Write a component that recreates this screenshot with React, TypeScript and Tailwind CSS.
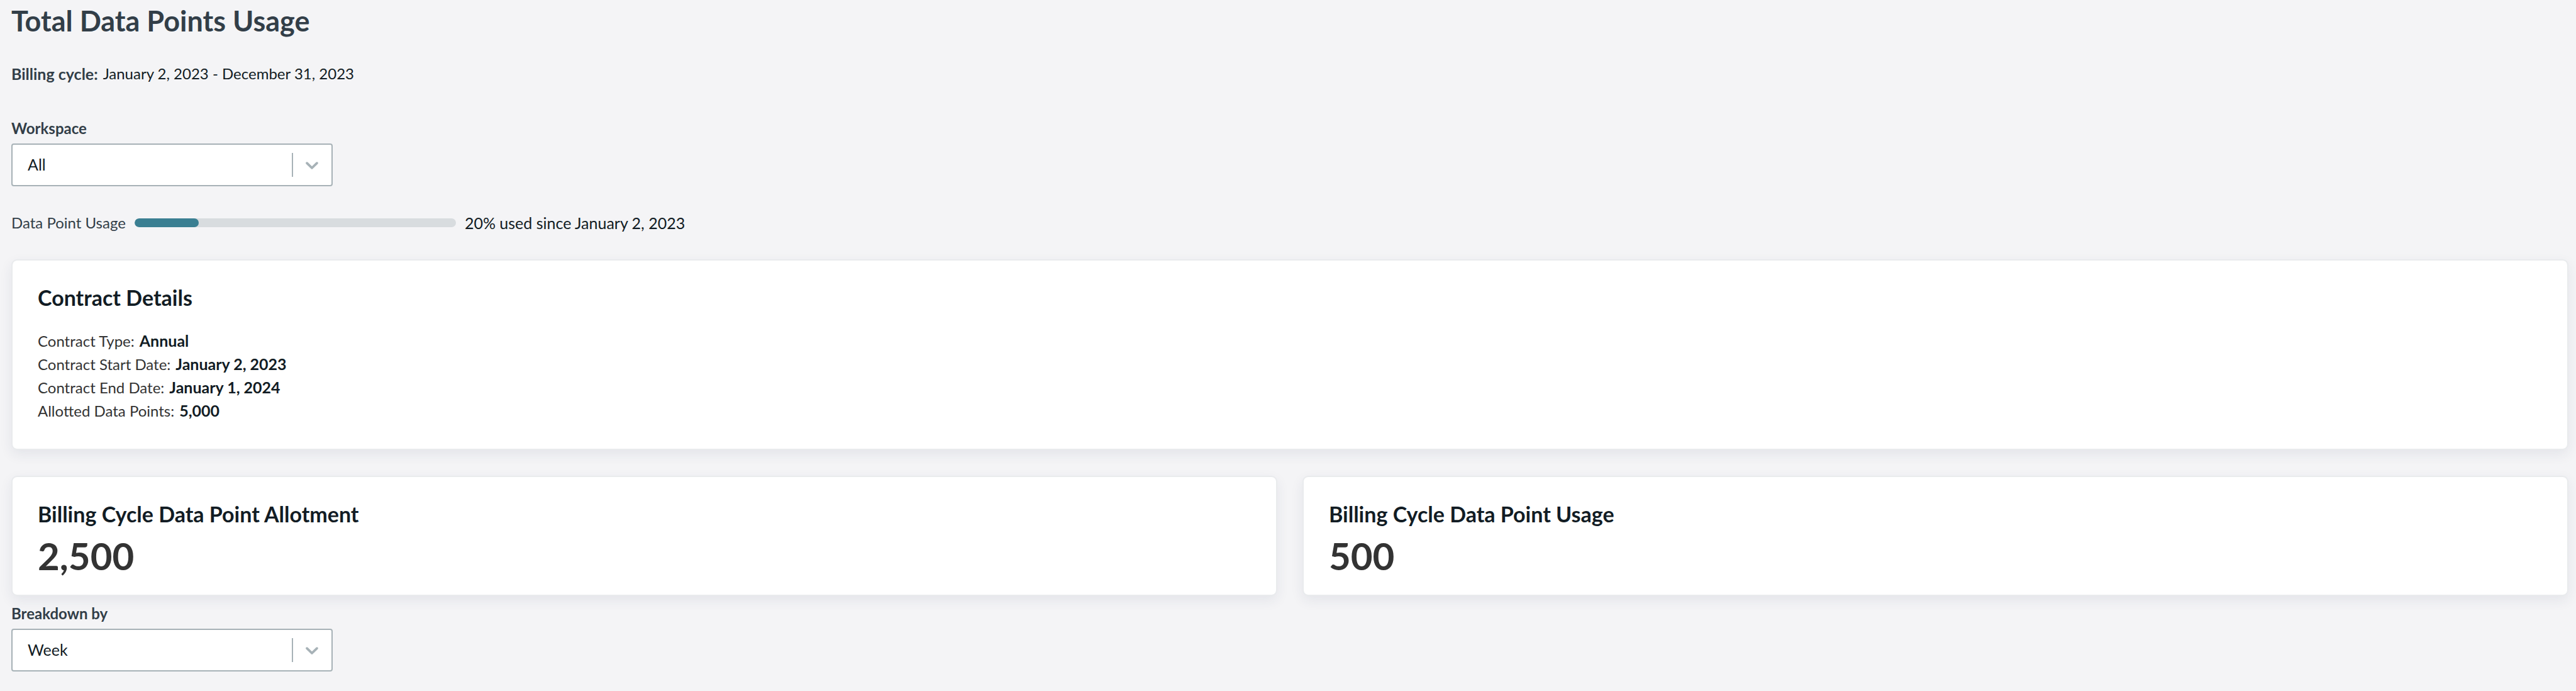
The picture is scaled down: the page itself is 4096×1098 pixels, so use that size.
import type { ReactNode } from "react";

const contract = [
  { label: "Contract Type:", value: "Annual" },
  { label: "Contract Start Date:", value: "January 2, 2023" },
  { label: "Contract End Date:", value: "January 1, 2024" },
  { label: "Allotted Data Points:", value: "5,000" },
];

function SelectField({ id, label, options }: { id: string; label: string; options: string[] }) {
  return (
    <div className="flex flex-col items-start gap-[6px]">
      <label htmlFor={id} className="text-[24px] leading-[36px] font-bold text-[#323e48]">
        {label}
      </label>
      <div className="relative w-[511px] max-w-full">
        <select
          id={id}
          className="block h-[68px] w-full appearance-none rounded-[4px] border-2 border-[#a7b2b7] bg-white pr-[70px] pl-[24px] text-[25px] text-[#121c24]"
        >
          {options.map((option) => (
            <option key={option}>{option}</option>
          ))}
        </select>
        <div className="pointer-events-none absolute inset-y-0 right-[16px] flex items-center gap-[13px]">
          <span className="h-[38px] w-[2px] bg-[#a7b2b7]" />
          <svg viewBox="0 0 20 20" className="size-[34px] fill-[#a7b2b7]" aria-hidden="true">
            <path d="M4.516 7.548c0.436-0.446 1.043-0.481 1.576 0l3.908 3.747 3.908-3.747c0.533-0.481 1.141-0.446 1.574 0 0.436 0.445 0.408 1.197 0 1.615-0.406 0.418-4.695 4.502-4.695 4.502-0.217 0.223-0.502 0.335-0.787 0.335s-0.57-0.112-0.789-0.335c0 0-4.287-4.084-4.695-4.502s-0.436-1.17 0-1.615z" />
          </svg>
        </div>
      </div>
    </div>
  );
}

function Card({ title, className, children }: { title: string; className: string; children: ReactNode }) {
  return (
    <section
      className={`rounded-[9px] border-2 border-[#e9ebed] bg-white bg-clip-padding px-[40px] pt-[38px] shadow-[0_7px_20px_rgba(40,50,90,0.08)] ${className}`}
    >
      <h2 className="text-[34px] leading-[42px] font-bold text-[#121c24]">{title}</h2>
      {children}
    </section>
  );
}

export default function App() {
  return (
    <main className="min-h-screen bg-[#f4f4f6] pt-[6px] pr-[12px] pb-[31px] pl-[18px] font-['Lato',sans-serif]">
      <h1 className="text-[45px] leading-[54px] font-bold text-[#323e48]">Total Data Points Usage</h1>

      <p className="mt-[39px] flex items-center gap-[8px] leading-[36px] text-[#121c24]">
        <strong className="text-[25px] font-bold text-[#323e48]">Billing cycle:</strong>
        <span className="text-[24px]">January 2, 2023 - December 31, 2023</span>
      </p>

      <div className="mt-[51px]">
        <SelectField id="workspace" label="Workspace" options={["All"]} />
      </div>

      <div className="mt-[40px] flex items-center gap-[14px] leading-[36px]">
        <span id="usage-label" className="text-[24px] text-[#323e48]">
          Data Point Usage
        </span>
        <div
          role="progressbar"
          aria-labelledby="usage-label"
          aria-valuenow={20}
          aria-valuemin={0}
          aria-valuemax={100}
          className="h-[14px] w-[511px] overflow-hidden rounded-full bg-[#d8dcdf]"
        >
          <div className="h-full w-1/5 rounded-full bg-[#3a7f92]" />
        </div>
        <span className="text-[25px] text-[#121c24]">20% used since January 2, 2023</span>
      </div>

      <Card title="Contract Details" className="mt-[40px] pb-[42px]">
        <dl className="mt-[29px]">
          {contract.map(({ label, value }) => (
            <div key={label} className="flex items-center gap-[8px] leading-[37px]">
              <dt className="text-[24px] text-[#333333]">{label}</dt>
              <dd className="text-[25px] font-bold text-[#121c24]">{value}</dd>
            </div>
          ))}
        </dl>
      </Card>

      <div className="mt-[41px] grid grid-cols-2 gap-[40px]">
        <Card title="Billing Cycle Data Point Allotment" className="pb-[30px]">
          <p className="mt-[13px] text-[60px] leading-[64px] font-bold text-[#333333]">2,500</p>
        </Card>
        <Card title="Billing Cycle Data Point Usage" className="pb-[30px]">
          <p className="mt-[13px] text-[60px] leading-[64px] font-bold text-[#333333]">500</p>
        </Card>
      </div>

      <div className="mt-[10px]">
        <SelectField id="breakdown" label="Breakdown by" options={["Week"]} />
      </div>
    </main>
  );
}
